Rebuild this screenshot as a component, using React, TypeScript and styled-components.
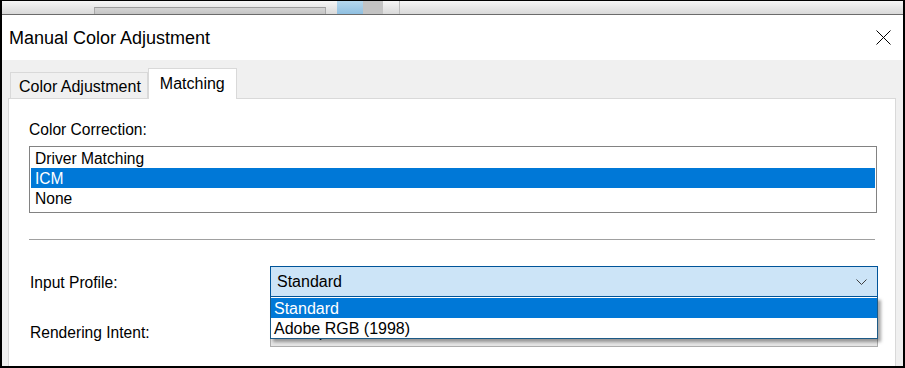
import React from "react";
import styled, { createGlobalStyle } from "styled-components";

const GlobalStyle = createGlobalStyle`
  html, body {
    margin: 0;
    padding: 0;
    background: #ffffff;
  }
  * {
    box-sizing: border-box;
  }
`;

const Frame = styled.div`
  width: 905px;
  height: 368px;
  border: 2px solid #000;
  border-top-width: 1px;
  display: flex;
  flex-direction: column;
  overflow: hidden;
  background: #f0f0f0;
  font-family: "Liberation Sans", Arial, sans-serif;
  color: #000;
`;

const BackStrip = styled.div`
  height: 14px;
  flex: none;
  display: flex;
  align-items: flex-end;
  padding-left: 92px;
  background: linear-gradient(#f6f6f6, #d9d9d9);
  border-bottom: 1px solid #6b6b6b;
`;

const ScrollTrack = styled.div`
  width: 232px;
  height: 7px;
  background: linear-gradient(#d4d4d4, #c4c4c4);
  border-top: 1px solid #9c9c9c;
  border-left: 1px solid #a8a8a8;
  border-right: 1px solid #a8a8a8;
  margin-right: 11px;
`;

const Thumb = styled.div<{ $bg: string; $w: number }>`
  width: ${(p) => p.$w}px;
  align-self: stretch;
  background: ${(p) => p.$bg};
`;

const VLine = styled.div`
  width: 1px;
  align-self: stretch;
  margin-left: 16px;
  background: #bdbdbd;
`;

const TitleBar = styled.div`
  height: 45px;
  flex: none;
  display: flex;
  align-items: center;
  justify-content: space-between;
  padding: 0 12px 0 7px;
  background: #fff;
`;

const Title = styled.span`
  font-size: 18px;
  line-height: 22px;
`;

const CloseButton = styled.div`
  width: 15px;
  height: 15px;
  display: flex;
`;

const Body = styled.div`
  flex: 1;
  display: flex;
  flex-direction: column;
  padding: 8px 7px 0 6px;
`;

const Tabs = styled.div`
  height: 30px;
  flex: none;
  display: flex;
  align-items: flex-end;
  padding-left: 2px;
`;

const Tab = styled.div<{ $active?: boolean }>`
  height: ${(p) => (p.$active ? "31px" : "26px")};
  margin-bottom: ${(p) => (p.$active ? "-1px" : "0")};
  padding: ${(p) => (p.$active ? "1px 11px 0 11px" : "1px 6px 0 8px")};
  background: ${(p) => (p.$active ? "#fff" : "#f0f0f0")};
  border: 1px solid #d9d9d9;
  border-bottom: none;
  font-size: 16px;
  line-height: ${(p) => (p.$active ? "28px" : "26px")};
  position: relative;
  z-index: ${(p) => (p.$active ? 1 : 0)};
`;

const Panel = styled.div`
  flex: 1;
  background: #fff;
  border: 1px solid #d9d9d9;
  border-bottom: none;
  padding: 19px 18px 0 20px;
  display: flex;
  flex-direction: column;
`;

const Label = styled.div<{ $indent?: number }>`
  font-size: 15.6px;
  line-height: 20px;
  padding-top: 2px;
  padding-left: ${(p) => p.$indent ?? 1}px;
`;

const ListBox = styled.div`
  margin-top: 6px;
  border: 1px solid #828282;
  padding: 1px 1px 4px;
  display: flex;
  flex-direction: column;
`;

const ListRow = styled.div<{ $selected?: boolean }>`
  height: 20px;
  line-height: 22px;
  overflow: hidden;
  padding-left: 4px;
  font-size: 15.6px;
  background: ${(p) => (p.$selected ? "#0078d7" : "transparent")};
  color: ${(p) => (p.$selected ? "#fff" : "#000")};
`;

const Separator = styled.div`
  height: 1px;
  margin: 26px 2px 0 0;
  background: #a0a0a0;
`;

const FormRow = styled.div<{ $gap: number }>`
  margin-top: ${(p) => p.$gap}px;
  display: grid;
  grid-template-columns: 241px 608px;
  align-items: center;
`;

const ComboWrap = styled.div<{ $top?: boolean }>`
  position: relative;
  z-index: ${(p) => (p.$top ? 2 : 0)};
`;

const Combo = styled.div<{ $open?: boolean }>`
  height: 31px;
  display: flex;
  align-items: center;
  justify-content: space-between;
  padding: 1px 10px 0 6px;
  font-size: 16px;
  background: ${(p) => (p.$open ? "#cce4f7" : "#e5e5e5")};
  border: 1px solid ${(p) => (p.$open ? "#005499" : "#adadad")};
`;

const Dropdown = styled.div`
  position: absolute;
  top: 100%;
  left: 0;
  width: 100%;
  background: #fff;
  border: 1px solid #1c5a86;
  border-top: none;
  padding-top: 1px;
  box-shadow: 3px 3px 3px rgba(0, 0, 0, 0.35);
`;

const Option = styled.div<{ $selected?: boolean }>`
  height: 20px;
  line-height: 22px;
  overflow: hidden;
  padding-left: 3px;
  font-size: 16px;
  background: ${(p) => (p.$selected ? "#0078d7" : "#fff")};
  color: ${(p) => (p.$selected ? "#fff" : "#000")};
`;

const Chevron = () => (
  <svg width="11" height="6" viewBox="0 0 11 6">
    <path d="M0.5 0.5 L5.5 5.5 L10.5 0.5" fill="none" stroke="#404040" strokeWidth="1" />
  </svg>
);

const CloseIcon = () => (
  <svg width="15" height="15" viewBox="0 0 15 15">
    <path d="M0.5 0.5 L14.5 14.5 M14.5 0.5 L0.5 14.5" stroke="#000" strokeWidth="1" />
  </svg>
);

export default function App() {
  return (
    <>
      <GlobalStyle />
      <Frame>
        <BackStrip>
          <ScrollTrack />
          <Thumb $bg="linear-gradient(#b6d8ee, #8fbfe0)" $w={26} />
          <Thumb $bg="#c3c3c3" $w={20} />
          <VLine />
        </BackStrip>
        <TitleBar>
          <Title>Manual Color Adjustment</Title>
          <CloseButton>
            <CloseIcon />
          </CloseButton>
        </TitleBar>
        <Body>
          <Tabs>
            <Tab>Color Adjustment</Tab>
            <Tab $active>Matching</Tab>
          </Tabs>
          <Panel>
            <Label $indent={0}>Color Correction:</Label>
            <ListBox>
              <ListRow>Driver Matching</ListRow>
              <ListRow $selected>ICM</ListRow>
              <ListRow>None</ListRow>
            </ListBox>
            <Separator />
            <FormRow $gap={26}>
              <Label>Input Profile:</Label>
              <ComboWrap $top>
                <Combo $open>
                  <span>Standard</span>
                  <Chevron />
                </Combo>
                <Dropdown>
                  <Option $selected>Standard</Option>
                  <Option>Adobe RGB (1998)</Option>
                </Dropdown>
              </ComboWrap>
            </FormRow>
            <FormRow $gap={19}>
              <Label>Rendering Intent:</Label>
              <ComboWrap>
                <Combo>
                  <span>Perceptual</span>
                  <Chevron />
                </Combo>
              </ComboWrap>
            </FormRow>
          </Panel>
        </Body>
      </Frame>
    </>
  );
}
